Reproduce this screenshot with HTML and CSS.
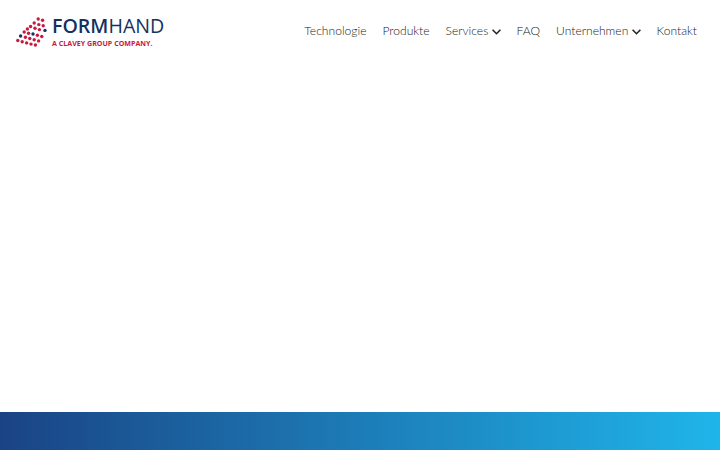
FILE: index.html
```html
<!DOCTYPE html>
<html lang="de">
<head>
    <meta charset="UTF-8">
    <meta name="viewport" content="width=device-width, initial-scale=1.0">
    <title>Formhand</title>
    <link rel="stylesheet" href="styles.css">
</head>
<body>
    <div class="page">
        <header class="header">
            <a class="logo" href="#">
                <svg class="logo-mark" width="32" height="30" viewBox="0 0 32 30">
                    <g fill="#c8193f">
                        <circle cx="22.2" cy="2" r="1.7"/><circle cx="26.6" cy="3.2" r="1.7"/>
                        <circle cx="18.2" cy="6" r="1.7"/><circle cx="22.8" cy="7.6" r="1.7"/><circle cx="27.2" cy="8.8" r="1.7"/>
                        <circle cx="14.6" cy="9.5" r="1.7"/><circle cx="19" cy="11.2" r="1.7"/><circle cx="23.4" cy="12.6" r="1.7"/>
                        <circle cx="11.4" cy="12" r="1.7"/><circle cx="8.2" cy="15" r="1.7"/><circle cx="12.6" cy="16.2" r="1.7"/>
                        <circle cx="21.4" cy="18.3" r="1.7"/><circle cx="25.8" cy="19.5" r="1.7"/>
                        <circle cx="9.4" cy="20.3" r="1.7"/><circle cx="13.8" cy="21.5" r="1.7"/><circle cx="18.2" cy="22.7" r="1.7"/><circle cx="22.6" cy="23.9" r="1.7"/>
                        <circle cx="1.8" cy="23.5" r="1.7"/><circle cx="6.2" cy="24.7" r="1.7"/><circle cx="10.6" cy="25.9" r="1.7"/><circle cx="15" cy="27.1" r="1.7"/><circle cx="19.4" cy="28" r="1.7"/>
                    </g>
                    <g fill="#12325f">
                        <circle cx="4.6" cy="19" r="1.7"/><circle cx="17" cy="17" r="1.7"/><circle cx="29" cy="13.4" r="1.7"/>
                    </g>
                </svg>
                <span class="logo-text">
                    <span class="logo-name"><b>FORM</b>HAND</span>
                    <span class="logo-tag">A CLAVEY GROUP COMPANY.</span>
                </span>
            </a>
            <nav class="nav">
                <a href="#">Technologie</a>
                <a href="#">Produkte</a>
                <a href="#">Services <svg class="chevron" width="9" height="6" viewBox="0 0 9 6"><path d="M.6 .8l3.9 3.9 3.9-3.9"/></svg></a>
                <a href="#">FAQ</a>
                <a href="#">Unternehmen <svg class="chevron" width="9" height="6" viewBox="0 0 9 6"><path d="M.6 .8l3.9 3.9 3.9-3.9"/></svg></a>
                <a href="#">Kontakt</a>
            </nav>
        </header>
        <main class="content"></main>
        <footer class="footer"></footer>
    </div>
</body>
</html>
```

FILE: styles.css
```css
html, body {
    margin: 0;
    padding: 0;
    height: 100%;
    background-color: #fff;
}

.page {
    display: flex;
    flex-direction: column;
    height: 450px;
    overflow: hidden;
}

.header {
    display: flex;
    align-items: flex-start;
    justify-content: space-between;
    height: 45px;
    padding: 17px 23px 0 16px;
}

.logo {
    display: flex;
    gap: 4px;
    text-decoration: none;
}

.logo-text {
    display: flex;
    flex-direction: column;
    margin-top: -1.5px;
}

.logo-name {
    font-family: "Open Sans", sans-serif;
    font-size: 19.6px;
    line-height: 20px;
    color: #12325f;
}

.logo-name b {
    font-weight: 600;
}

.logo-tag {
    font-family: "Open Sans", sans-serif;
    font-size: 7.1px;
    font-weight: 700;
    line-height: 10px;
    margin-top: 2px;
    color: #c8193f;
}

.nav {
    display: flex;
    align-items: center;
    gap: 16px;
    height: 26px;
}

.nav a {
    font-family: Lato, sans-serif;
    font-size: 12.1px;
    font-weight: 300;
    color: #222;
    text-decoration: none;
}

.chevron {
    fill: none;
    stroke: #222;
    stroke-width: 1.6;
}

.content {
    flex: 1;
}

.footer {
    height: 38px;
    background: linear-gradient(90deg, #1a4384, #1fb5ea);
}
```
